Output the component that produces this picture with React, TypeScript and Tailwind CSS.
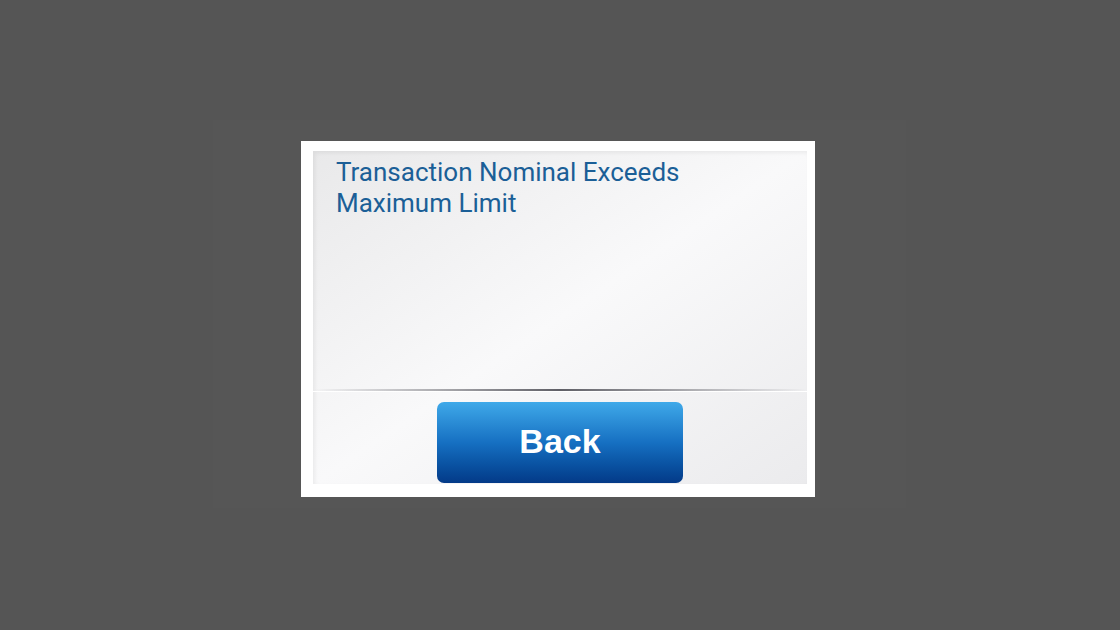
import React from 'react';

export default function App() {
    return (
        <div className="w-[1120px] h-[630px] bg-[#555555] overflow-hidden pt-[120px] pl-[213px]">
            <div className="w-[693px] h-[388px] bg-[#565656] pt-[21px] pl-[88px]">
                <div className="w-[514px] h-[356px] bg-white pt-[10px] pl-[12px]">
                    <div className="w-[494px] h-[333px] flex flex-col bg-gradient-to-br from-[#e9e9ea] via-[#f9f9fa] to-[#ebebed] shadow-[inset_2px_2px_4px_rgba(0,0,0,0.06)]">
                        <div className="h-[238px] pl-[23px] pt-[6px]">
                            <p className="font-['Roboto',sans-serif] text-[26px] leading-[31px] text-[#1b5f97]">
                                Transaction Nominal Exceeds
                                <br />
                                Maximum Limit
                            </p>
                        </div>
                        <div className="h-[2px] bg-gradient-to-r from-transparent via-[#5f5f66] to-transparent" />
                        <div className="h-[1px] bg-white" />
                        <div className="flex-1 flex justify-center pt-[10px]">
                            <button className="w-[246px] h-[81px] rounded-[7px] bg-gradient-to-b from-[#3fa9e9] via-[#1670c2] to-[#043a88] text-white font-['Liberation_Sans',Arial,sans-serif] font-bold text-[34px] leading-none pb-[4px]">
                                Back
                            </button>
                        </div>
                    </div>
                </div>
            </div>
        </div>
    );
}
